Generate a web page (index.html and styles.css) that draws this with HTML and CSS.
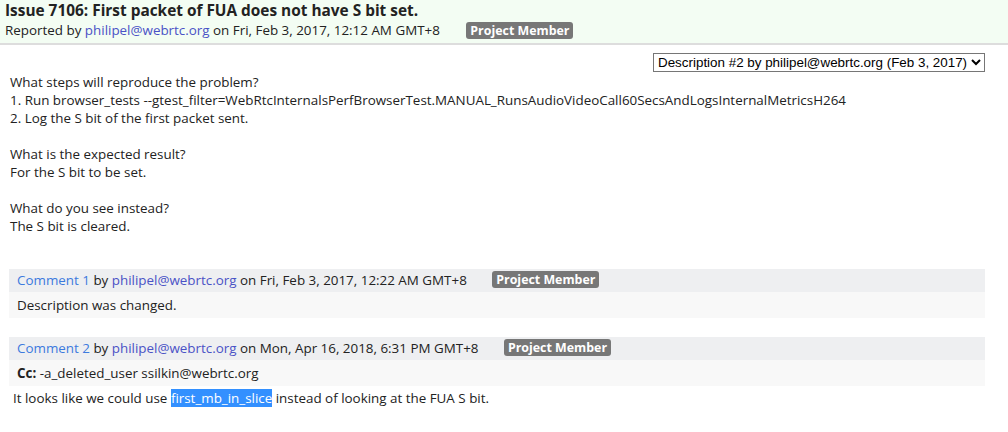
FILE: index.html
```html
<!DOCTYPE html>
<html lang="en">
<head>
  <meta charset="UTF-8" />
  <title>Issue 7106</title>
  <link rel="stylesheet" href="styles.css">
</head>
<body>
  <div class="issue-header">
    <div class="issue-title">Issue 7106: First packet of FUA does not have S bit set.</div>
    <div class="issue-meta">
      Reported by <a class="user" href="#">philipel@webrtc.org</a> on Fri, Feb 3, 2017, 12:12 AM GMT+8
      <span class="badge">Project Member</span>
    </div>
  </div>

  <div class="desc-picker">
    <select>
      <option>Description #2 by philipel@webrtc.org (Feb 3, 2017)</option>
    </select>
  </div>

  <div class="description">What steps will reproduce the problem?
1. Run browser_tests --gtest_filter=WebRtcInternalsPerfBrowserTest.MANUAL_RunsAudioVideoCall60SecsAndLogsInternalMetricsH264
2. Log the S bit of the first packet sent.

What is the expected result?
For the S bit to be set.

What do you see instead?
The S bit is cleared.</div>

  <div class="comment">
    <div class="comment-head">
      <a class="comment-link" href="#">Comment 1</a> by <a class="user" href="#">philipel@webrtc.org</a> on Fri, Feb 3, 2017, 12:22 AM GMT+8
      <span class="badge">Project Member</span>
    </div>
    <div class="comment-body">Description was changed.</div>
  </div>

  <div class="comment">
    <div class="comment-head">
      <a class="comment-link" href="#">Comment 2</a> by <a class="user" href="#">philipel@webrtc.org</a> on Mon, Apr 16, 2018, 6:31 PM GMT+8
      <span class="badge">Project Member</span>
    </div>
    <div class="comment-body"><b>Cc:</b> -a_deleted_user ssilkin@webrtc.org</div>
  </div>
  <div class="comment-text">It looks like we could use <span class="selected">first_mb_in_slice</span> instead of looking at the FUA S bit.</div>
</body>
</html>
```

FILE: styles.css
```css
body {
  margin: 0;
  font-family: "Open Sans", sans-serif;
  font-size: 13.4px;
  color: #222;
  background: #fff;
}
a {
  text-decoration: none;
}
.user {
  color: #4a52c6;
}
.comment-link {
  color: #3c7ade;
}
.issue-header {
  background: #f3fdf3;
  border-bottom: 2px solid #ddd;
  padding: 1px 5px 4px;
  height: 38px;
}
.issue-title {
  font-weight: bold;
  font-size: 15.4px;
  line-height: 20px;
}
.issue-meta {
  line-height: 18px;
}
.badge {
  display: inline-block;
  background: #777;
  color: #fff;
  font-weight: bold;
  font-size: 12.4px;
  line-height: 17px;
  padding: 0 4px;
  border-radius: 3px;
  margin-left: 23px;
}
.desc-picker {
  display: flex;
  justify-content: flex-end;
  padding: 8px 23px 0 0;
}
.desc-picker select {
  font-family: "Liberation Sans", Arial, sans-serif;
  font-size: 13.4px;
  height: 19px;
  padding: 0;
  border: 1px solid #767676;
  border-radius: 0;
  background: #fff;
  color: #000;
}
.description {
  white-space: pre-wrap;
  line-height: 18px;
  padding: 1px 10px 0;
  margin-bottom: 34px;
}
.comment {
  margin: 0 23px 19px 9px;
}
.comment-head {
  background: #eeeff1;
  height: 23px;
  line-height: 23px;
  padding: 0 8px;
}
.comment-body {
  background: #f8f8f8;
  line-height: 26px;
  padding: 0 8px;
}
.comment .badge {
  vertical-align: 1px;
  margin-left: 22px;
}
.comment-text {
  margin-top: -21px;
  padding: 5px 13px;
  line-height: 18px;
}
.selected {
  background: #3390ff;
  color: #fff;
}
```
